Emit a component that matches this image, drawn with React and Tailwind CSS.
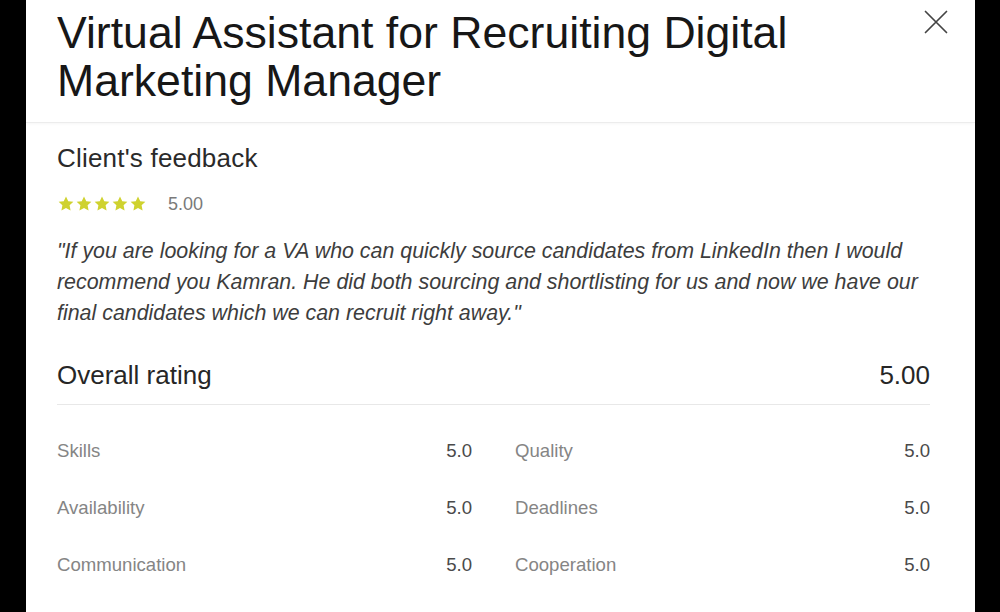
const ratings = [
  ['Skills', '5.0', 'Quality', '5.0'],
  ['Availability', '5.0', 'Deadlines', '5.0'],
  ['Communication', '5.0', 'Cooperation', '5.0'],
];

const Star = () => (
  <svg viewBox="0 0 24 24" className="h-[18px] w-[18px]" fill="#cfd22f">
    <path d="M12 2l3 6.3 6.8.8-5 4.7 1.3 6.8L12 17.2l-6.1 3.4 1.3-6.8-5-4.7 6.8-.8z" />
  </svg>
);

const CloseIcon = () => (
  <svg viewBox="0 0 24 24" className="h-[24px] w-[24px]" fill="none" stroke="#444" strokeWidth="1.7" strokeLinecap="round">
    <path d="M1.5 1.5l21 21M22.5 1.5l-21 21" />
  </svg>
);

const App = () => {
  return (
    <div
      className="flex h-[612px] w-full bg-black pl-[26px] pr-[25px]"
      style={{ fontFamily: '"Liberation Sans", Arial, sans-serif' }}
    >
      <div className="flex flex-1 flex-col overflow-hidden bg-white">
        {/* header */}
        <div className="flex items-start justify-between border-b border-[#ececec] pl-[31px] pr-[27px] pt-[9px] pb-[17px] shadow-[0_1px_3px_rgba(0,0,0,0.04)]">
          <h1 className="max-w-[850px] text-[44.6px] leading-[48px] text-[#171717]">
            Virtual Assistant for Recruiting Digital Marketing Manager
          </h1>
          <button className="mt-[1px]">
            <CloseIcon />
          </button>
        </div>

        {/* feedback */}
        <div className="pl-[31px] pr-[45px] pt-[20px]">
          <h2 className="text-[26px] leading-[30px] tracking-[0.2px] text-[#2a2a2a]">Client's feedback</h2>
          <div className="mt-[22px] flex items-center">
            <div className="flex">
              <Star />
              <Star />
              <Star />
              <Star />
              <Star />
            </div>
            <span className="ml-[21px] text-[18px] leading-[18px] text-[#7a7a7a]">5.00</span>
          </div>
          <p className="mt-[23px] text-[21.4px] italic leading-[31px] text-[#3d3d3d]">
            "If you are looking for a VA who can quickly source candidates from LinkedIn then I would
            recommend you Kamran. He did both sourcing and shortlisting for us and now we have our
            final candidates which we can recruit right away."
          </p>

          {/* overall */}
          <div className="mt-[31px] flex items-center justify-between border-b border-[#e8e8e8] pb-[14px]">
            <span className="text-[26px] leading-[30px] text-[#262626]">Overall rating</span>
            <span className="text-[26px] leading-[30px] text-[#262626]">5.00</span>
          </div>

          <div className="mt-[35px] grid grid-cols-2 gap-x-[43px] gap-y-[35px]">
            {ratings.map(([l1, v1, l2, v2]) => (
              <div key={l1} className="contents">
                <div className="flex items-center justify-between text-[18.6px] leading-[22px]">
                  <span className="text-[#858585]">{l1}</span>
                  <span className="text-[#4a4a4a]">{v1}</span>
                </div>
                <div className="flex items-center justify-between text-[18.6px] leading-[22px]">
                  <span className="text-[#858585]">{l2}</span>
                  <span className="text-[#4a4a4a]">{v2}</span>
                </div>
              </div>
            ))}
          </div>
        </div>
      </div>
    </div>
  );
};

export default App;
